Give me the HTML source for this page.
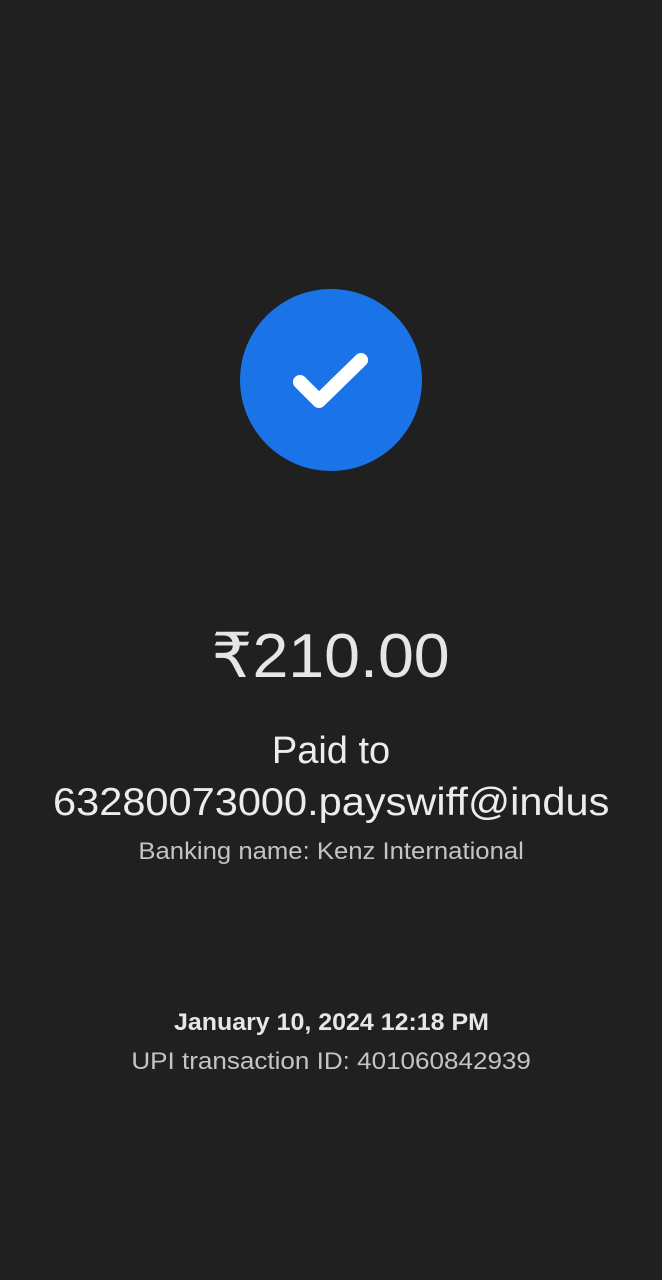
<!DOCTYPE html>
<html><head><meta charset="utf-8"><style>
html,body{margin:0;padding:0;background:#202020;}
body{width:662px;height:1280px;position:relative;overflow:hidden;font-family:"Liberation Sans",sans-serif;}
.t{position:absolute;left:0;width:662px;text-align:center;white-space:nowrap;line-height:1;}
</style></head><body>
<svg style="position:absolute;left:0;top:0" width="662" height="600">
<circle cx="331" cy="380" r="91" fill="#1b73e8"/>
<path d="M300 382 L319 401 L361 360" fill="none" stroke="#fff" stroke-width="14" stroke-linecap="round" stroke-linejoin="round"/>
</svg>
<div class="t" style="top:626px;font-size:62px;color:#e6e6e6;"><span style="display:inline-block;transform:scaleX(1.04)">₹210.00</span></div>
<div class="t" style="top:732px;font-size:38px;color:#ececec;">Paid to</div>
<div class="t" style="top:783px;font-size:39px;color:#ececec;"><span style="display:inline-block;transform:scaleX(1.065)">63280073000.payswiff@indus</span></div>
<div class="t" style="top:840px;font-size:24px;color:#c4c4c4;"><span style="display:inline-block;transform:scaleX(1.07)">Banking name: Kenz International</span></div>
<div class="t" style="top:1011px;font-size:24px;font-weight:bold;color:#e6e6e6;"><span style="display:inline-block;transform:scaleX(1.04)">January 10, 2024 12:18 PM</span></div>
<div class="t" style="top:1050px;font-size:24px;color:#c4c4c4;"><span style="display:inline-block;transform:scaleX(1.085)">UPI transaction ID: 401060842939</span></div>
</body></html>
